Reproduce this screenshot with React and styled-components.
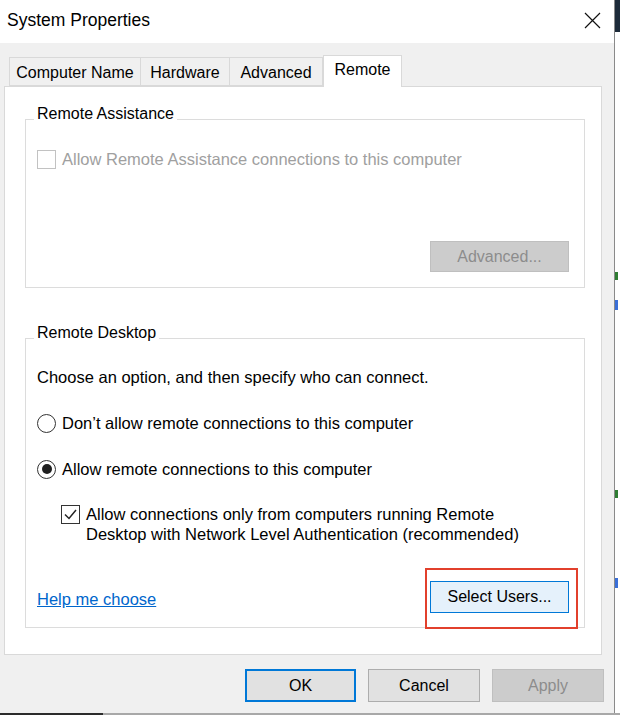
import React from "react";
import styled, { createGlobalStyle } from "styled-components";

const GlobalStyle = createGlobalStyle`
  html, body {
    margin: 0;
    padding: 0;
    background: #ffffff;
  }
  body {
    font-family: "Liberation Sans", Arial, sans-serif;
    font-size: 16px;
    color: #000;
  }
`;

const Screen = styled.div`
  width: 620px;
  height: 715px;
  display: flex;
  flex-direction: column;
  overflow: hidden;
`;

const Main = styled.div`
  display: flex;
  height: 713px;
`;

const Window = styled.div`
  width: 614px;
  display: flex;
  flex-direction: column;
  background: #f0f0f0;
  border-right: 1px solid #8a8a8a;
`;

const BackStrip = styled.div`
  flex: 1;
  display: flex;
  flex-direction: column;
  background: #ffffff;
`;

const StripTop = styled.div`
  height: 32px;
  background: #1d2b3a;
`;

const StripMark = styled.div`
  height: ${(p) => p.h}px;
  margin-top: ${(p) => p.top}px;
  width: 3px;
  background: ${(p) => p.color};
`;

const BottomEdge = styled.div`
  display: flex;
  height: 2px;
`;

const EdgePart = styled.div`
  width: ${(p) => (p.w ? `${p.w}px` : "auto")};
  flex: ${(p) => (p.w ? "none" : 1)};
  background: ${(p) => p.color};
`;

const TitleBar = styled.div`
  height: 43px;
  background: #ffffff;
  display: flex;
  align-items: center;
  justify-content: space-between;
  padding: 0 13px 2px 7px;
  box-sizing: border-box;
`;

const Title = styled.div`
  font-size: 17.5px;
  color: #000;
`;

const CloseBtn = styled.div`
  width: 17px;
  height: 17px;
  display: flex;
  align-items: center;
  justify-content: center;
`;

const Body = styled.div`
  flex: 1;
  display: flex;
  flex-direction: column;
  padding: 12px 10px 0 4px;
`;

const TabStrip = styled.div`
  display: flex;
  align-items: flex-end;
  height: 32px;
  padding-left: 5px;
  margin-bottom: -1px;
  position: relative;
  z-index: 1;
`;

const Tab = styled.div`
  box-sizing: border-box;
  width: ${(p) => p.w}px;
  height: ${(p) => (p.active ? 32 : 29)}px;
  margin-bottom: ${(p) => (p.active ? 0 : 1)}px;
  border: 1px solid #d9d9d9;
  border-bottom: ${(p) => (p.active ? "none" : "1px solid #d9d9d9")};
  border-left: ${(p) => (p.first || p.active ? "1px solid #d9d9d9" : "none")};
  background: ${(p) => (p.active ? "#ffffff" : "#f0f0f0")};
  display: flex;
  justify-content: center;
  padding-top: ${(p) => (p.active ? 5 : 6)}px;
  font-size: 16px;
`;

const Panel = styled.div`
  box-sizing: border-box;
  width: 598px;
  height: 569px;
  background: #ffffff;
  border: 1px solid #d9d9d9;
  padding: 18px 16px 0 20px;
  display: flex;
  flex-direction: column;
`;

const Group = styled.fieldset`
  margin: ${(p) => p.top || 0}px 0 0 0;
  padding: 0 15px 0 11px;
  border: 1px solid #dcdcdc;
  min-inline-size: auto;
  height: ${(p) => p.h}px;
  box-sizing: border-box;
`;

const Legend = styled.legend`
  margin-left: -3px;
  padding: 0 3px 10px 3px;
  font-size: 16px;
  line-height: 18px;
`;

const Row = styled.div`
  display: flex;
  align-items: ${(p) => (p.top ? "flex-start" : "center")};
  margin-top: ${(p) => p.mt}px;
  margin-left: ${(p) => p.ml || 0}px;
  font-size: 16.5px;
  line-height: 20px;
  color: ${(p) => (p.disabled ? "#a0a0a0" : "#000")};
`;

const Box = styled.div`
  box-sizing: border-box;
  width: 19px;
  height: 19px;
  flex: none;
  border: 1px solid ${(p) => (p.disabled ? "#c2c2c2" : "#333333")};
  background: #fff;
  margin-right: 6px;
  margin-top: ${(p) => (p.top ? 1 : 0)}px;
  display: flex;
  align-items: center;
  justify-content: center;
`;

const Radio = styled.div`
  box-sizing: border-box;
  width: 19px;
  height: 19px;
  flex: none;
  border-radius: 50%;
  border: 1px solid #333333;
  margin-right: 6px;
  display: flex;
  align-items: center;
  justify-content: center;
  &::after {
    content: "";
    display: ${(p) => (p.checked ? "block" : "none")};
    width: 10px;
    height: 10px;
    border-radius: 50%;
    background: #1f1f1f;
  }
`;

const Text = styled.div`
  margin-top: ${(p) => p.mt}px;
  font-size: 16.5px;
  line-height: 20px;
`;

const ButtonRow = styled.div`
  display: flex;
  align-items: center;
  justify-content: ${(p) => p.justify || "space-between"};
  margin-top: ${(p) => p.mt || 0}px;
`;

const Button = styled.div`
  box-sizing: border-box;
  width: ${(p) => p.w}px;
  height: ${(p) => p.h || 32}px;
  display: flex;
  align-items: center;
  justify-content: center;
  font-size: 16px;
  color: ${(p) => (p.disabled ? "#8c8c8c" : "#000")};
  background: ${(p) =>
    p.disabled ? "#cccccc" : p.hover ? "#e5f1fb" : "#e1e1e1"};
  border: ${(p) =>
    p.primary
      ? "2px solid #0078d7"
      : p.disabled
      ? "1px solid #bfbfbf"
      : p.hover
      ? "1px solid #0078d7"
      : "1px solid #adadad"};
`;

const HelpLink = styled.a`
  color: #0066cc;
  text-decoration: underline;
  font-size: 16.5px;
  margin-top: 4px;
  cursor: pointer;
`;

const Highlight = styled.div`
  position: relative;
  &::after {
    content: "";
    position: absolute;
    left: -5px;
    right: -9px;
    top: -13px;
    bottom: -16px;
    border: 2px solid #e2402c;
    pointer-events: none;
  }
`;

const Footer = styled.div`
  display: flex;
  justify-content: flex-end;
  gap: 12px;
  margin-top: 14px;
`;

const CheckMark = () => (
  <svg width="15" height="15" viewBox="0 0 15 15">
    <polyline
      points="2,7.5 6,11.5 13,3"
      fill="none"
      stroke="#222"
      strokeWidth="1.5"
    />
  </svg>
);

const tabs = [
  { label: "Computer Name", w: 132 },
  { label: "Hardware", w: 89 },
  { label: "Advanced", w: 93 },
  { label: "Remote", w: 79, active: true },
];

export default function App() {
  return (
    <Screen>
      <GlobalStyle />
      <Main>
        <Window>
          <TitleBar>
            <Title>System Properties</Title>
            <CloseBtn>
              <svg width="17" height="17" viewBox="0 0 17 17">
                <path d="M1 1 L16 16 M16 1 L1 16" stroke="#111" strokeWidth="1.2" />
              </svg>
            </CloseBtn>
          </TitleBar>
          <Body>
            <TabStrip>
              {tabs.map((t, i) => (
                <Tab key={t.label} w={t.w} active={t.active} first={i === 0}>
                  {t.label}
                </Tab>
              ))}
            </TabStrip>
            <Panel>
              <Group h={183}>
                <Legend>Remote Assistance</Legend>
                <Row mt={16} disabled>
                  <Box disabled />
                  Allow Remote Assistance connections to this computer
                </Row>
                <ButtonRow justify="flex-end" mt={72}>
                  <Button w={139} h={31} disabled>
                    Advanced...
                  </Button>
                </ButtonRow>
              </Group>
              <Group h={304} top={36}>
                <Legend>Remote Desktop</Legend>
                <Text mt={15}>Choose an option, and then specify who can connect.</Text>
                <Row mt={26}>
                  <Radio />
                  Don’t allow remote connections to this computer
                </Row>
                <Row mt={26}>
                  <Radio checked />
                  Allow remote connections to this computer
                </Row>
                <Row mt={25} ml={24} top>
                  <Box top>
                    <CheckMark />
                  </Box>
                  <div>
                    Allow connections only from computers running Remote
                    <br />
                    Desktop with Network Level Authentication (recommended)
                  </div>
                </Row>
                <ButtonRow mt={37}>
                  <HelpLink>Help me choose</HelpLink>
                  <Highlight>
                    <Button w={139} h={32} hover>
                      Select Users...
                    </Button>
                  </Highlight>
                </ButtonRow>
              </Group>
            </Panel>
            <Footer>
              <Button w={111} h={33} primary>
                OK
              </Button>
              <Button w={112} h={33}>
                Cancel
              </Button>
              <Button w={112} h={33} disabled>
                Apply
              </Button>
            </Footer>
          </Body>
        </Window>
        <BackStrip>
          <StripTop />
          <StripMark top={240} h={8} color="#2e7d32" />
          <StripMark top={20} h={10} color="#3a6fd8" />
          <StripMark top={180} h={8} color="#2e7d32" />
          <StripMark top={80} h={10} color="#3a6fd8" />
        </BackStrip>
      </Main>
      <BottomEdge>
        <EdgePart w={103} color="#2b2b2b" />
        <EdgePart color="#a8a8a8" />
      </BottomEdge>
    </Screen>
  );
}
